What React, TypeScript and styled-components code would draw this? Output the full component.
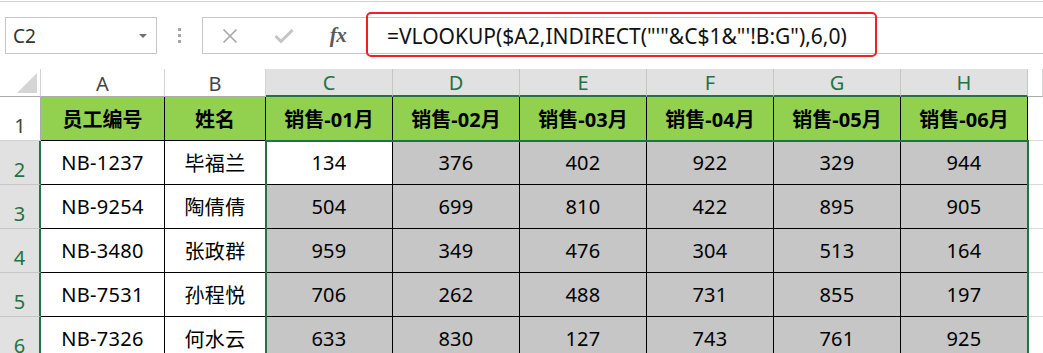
import React from 'react';
import styled, { createGlobalStyle, css } from 'styled-components';

const GREEN = '#217346';

const GlobalStyle = createGlobalStyle`
  html, body { margin: 0; padding: 0; background: #ffffff; overflow: hidden; }
  body { font-family: "Noto Sans", "Noto Sans CJK SC", sans-serif; }
  * { box-sizing: border-box; }
`;

const Page = styled.div`
  width: 1043px;
  height: 353px;
  overflow: hidden;
  display: flex;
  flex-direction: column;
  & > * {
    flex-shrink: 0;
  }
`;

const TopRule = styled.div`
  margin-top: 1px;
  height: 1px;
  background: #d4d4d4;
`;

const FormulaRow = styled.div`
  display: flex;
  align-items: stretch;
  height: 37px;
  margin-top: 15px;
  padding-left: 5px;
`;

const NameBox = styled.div`
  width: 152px;
  border: 1px solid #c6c6c6;
  display: flex;
  align-items: center;
  justify-content: space-between;
  padding: 0 9px 0 7px;
  font-size: 19px;
  color: #333;
`;

const DropArrow = styled.span`
  width: 0;
  height: 0;
  border-left: 4px solid transparent;
  border-right: 4px solid transparent;
  border-top: 4px solid #707070;
`;

const Grip = styled.div`
  width: 45px;
  display: flex;
  flex-direction: column;
  align-items: center;
  justify-content: center;
  gap: 3px;
`;

const GripDot = styled.span`
  width: 3px;
  height: 3px;
  background: #a6a6a6;
`;

const FxBar = styled.div`
  flex: 1;
  display: flex;
  border: 1px solid #c6c6c6;
  border-right: none;
`;

const FxButtons = styled.div`
  display: flex;
  align-items: center;
`;

const IconSlot = styled.div`
  width: 54px;
  height: 100%;
  display: flex;
  align-items: center;
  justify-content: center;
`;

const FxLabel = styled.span`
  font-family: "Liberation Serif", "DejaVu Serif", serif;
  font-style: italic;
  font-weight: bold;
  font-size: 21px;
  color: #5a5a5a;
  letter-spacing: -0.5px;
`;

const FormulaInput = styled.div`
  flex: 1;
  position: relative;
  display: flex;
  align-items: center;
  padding-left: 22px;
  font-size: 21px;
  color: #111;
  white-space: pre;
`;

const Highlight = styled.div`
  position: absolute;
  left: 1px;
  top: -6px;
  width: 511px;
  height: 45px;
  border: 2px solid #ee2024;
  border-radius: 5px;
  pointer-events: none;
`;

const Sheet = styled.div`
  margin-top: 15px;
  display: grid;
  grid-template-columns: 41px 124px 101px repeat(6, 127px) 1fr;
  grid-template-rows: 28px repeat(6, 44px);
`;

type Place = { $r: number; $c: number };

const placed = css<Place>`
  grid-row: ${(p) => p.$r};
  grid-column: ${(p) => p.$c};
`;

const Corner = styled.div`
  grid-row: 1;
  grid-column: 1;
  border-right: 1px solid #d4d4d4;
  border-bottom: 1px solid #ababab;
  display: flex;
  align-items: flex-end;
  justify-content: flex-end;
  padding: 0 3px 3px 0;
`;

const ColHeader = styled.div<Place & { $selected?: boolean }>`
  ${placed}
  display: flex;
  align-items: center;
  justify-content: center;
  font-size: 20px;
  padding-top: 1px;
  border-right: 1px solid #d4d4d4;
  ${(p) =>
    p.$selected
      ? css`
          background: #e1e1e1;
          color: ${GREEN};
          border-bottom: 2px solid ${GREEN};
          border-right-color: #c6c6c6;
        `
      : css`
          background: #ffffff;
          color: #444;
          border-bottom: 1px solid #ababab;
        `}
`;

const RowHeader = styled.div<Place & { $selected?: boolean }>`
  ${placed}
  display: flex;
  align-items: center;
  justify-content: center;
  padding-top: 14px;
  font-size: 20px;
  ${(p) =>
    p.$selected
      ? css`
          background: #e1e1e1;
          color: ${GREEN};
          border-right: 2px solid ${GREEN};
          border-bottom: 1px solid #c6c6c6;
        `
      : css`
          background: #ffffff;
          color: #444;
          border-right: 1px solid #ababab;
          border-bottom: 1px solid #d4d4d4;
        `}
`;

type CellKind = 'head' | 'plain' | 'sel' | 'active' | 'blank';

const Cell = styled.div<Place & { $kind: CellKind }>`
  ${placed}
  display: flex;
  align-items: center;
  justify-content: center;
  font-size: 20px;
  color: #000;
  letter-spacing: 0.3px;
  border-right: 1px solid #000;
  border-bottom: 1px solid #000;
  background: #ffffff;
  ${(p) =>
    p.$kind === 'head' &&
    css`
      background: #92d050;
      font-weight: bold;
      letter-spacing: 0;
    `}
  ${(p) =>
    p.$kind === 'sel' &&
    css`
      background: #c6c6c6;
    `}
  ${(p) =>
    p.$kind === 'blank' &&
    css`
      border-right: none;
      border-bottom: 1px solid #d9d9d9;
    `}
`;

const SelectionFrame = styled.div`
  grid-column: 4 / 10;
  grid-row: 3 / 8;
  margin: -1px -1px 0 -1px;
  border: 2px solid ${GREEN};
  position: relative;
  z-index: 1;
  pointer-events: none;
`;

const columns = ['A', 'B', 'C', 'D', 'E', 'F', 'G', 'H', ''];
const headers = ['员工编号', '姓名', '销售-01月', '销售-02月', '销售-03月', '销售-04月', '销售-05月', '销售-06月'];
const rows: (string | number)[][] = [
  ['NB-1237', '毕福兰', 134, 376, 402, 922, 329, 944],
  ['NB-9254', '陶倩倩', 504, 699, 810, 422, 895, 905],
  ['NB-3480', '张政群', 959, 349, 476, 304, 513, 164],
  ['NB-7531', '孙程悦', 706, 262, 488, 731, 855, 197],
  ['NB-7326', '何水云', 633, 830, 127, 743, 761, 925],
];

export default function App() {
  return (
    <>
      <GlobalStyle />
      <Page>
        <TopRule />
        <FormulaRow>
          <NameBox>
            <span>C2</span>
            <DropArrow />
          </NameBox>
          <Grip>
            <GripDot />
            <GripDot />
            <GripDot />
          </Grip>
          <FxBar>
            <FxButtons>
              <IconSlot>
                <svg width="16" height="16" viewBox="0 0 16 16">
                  <path d="M1.5 1.5 L14.5 14.5 M14.5 1.5 L1.5 14.5" stroke="#a9a9a9" strokeWidth="1.7" fill="none" />
                </svg>
              </IconSlot>
              <IconSlot>
                <svg width="20" height="16" viewBox="0 0 20 16">
                  <polyline points="1.5,8 7,13.5 18.5,2" stroke="#c4c4c4" strokeWidth="3" fill="none" />
                </svg>
              </IconSlot>
              <IconSlot>
                <FxLabel>fx</FxLabel>
              </IconSlot>
            </FxButtons>
            <FormulaInput>
              {`=VLOOKUP($A2,INDIRECT("'"&C$1&"'!B:G"),6,0)`}
              <Highlight />
            </FormulaInput>
          </FxBar>
        </FormulaRow>
        <Sheet>
          <Corner>
            <svg width="20" height="20" viewBox="0 0 20 20">
              <polygon points="20,0 20,20 0,20" fill="#d5d5d5" />
            </svg>
          </Corner>
          {columns.map((c, i) => (
            <ColHeader key={'h' + i} $r={1} $c={i + 2} $selected={i >= 2 && i <= 7}>
              {c}
            </ColHeader>
          ))}
          <RowHeader $r={2} $c={1}>1</RowHeader>
          {headers.map((h, i) => (
            <Cell key={'t' + i} $r={2} $c={i + 2} $kind="head">
              {h}
            </Cell>
          ))}
          <Cell $r={2} $c={10} $kind="blank" />
          {rows.map((r, ri) => (
            <React.Fragment key={'r' + ri}>
              <RowHeader $r={ri + 3} $c={1} $selected>
                {ri + 2}
              </RowHeader>
              {r.map((v, ci) => {
                let kind: CellKind = 'plain';
                if (ci >= 2) kind = ri === 0 && ci === 2 ? 'active' : 'sel';
                return (
                  <Cell key={ci} $r={ri + 3} $c={ci + 2} $kind={kind}>
                    {v}
                  </Cell>
                );
              })}
              <Cell $r={ri + 3} $c={10} $kind="blank" />
            </React.Fragment>
          ))}
          <SelectionFrame />
        </Sheet>
      </Page>
    </>
  );
}
